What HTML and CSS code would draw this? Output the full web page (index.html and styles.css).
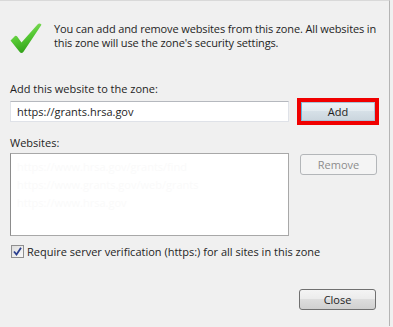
FILE: index.html
```html
<!DOCTYPE html>
<html lang="en">
<head>
    <meta charset="UTF-8">
    <meta name="viewport" content="width=device-width, initial-scale=1.0">
    <title>Trusted sites</title>
    <link rel="stylesheet" href="styles.css">
</head>
<body>
    <div class="dialog">
        <div class="intro">
            <svg class="check-icon" width="32" height="31" viewBox="0 0 32 31">
                <defs>
                    <linearGradient id="checkFill" x1="0" y1="0" x2="0.4" y2="1">
                        <stop offset="0" stop-color="#a6ea7a"/>
                        <stop offset="0.55" stop-color="#56c934"/>
                        <stop offset="1" stop-color="#32a01a"/>
                    </linearGradient>
                </defs>
                <path d="M0.5 17.5 L5 13 Q6 12.2 7 13.2 L11.5 19.5 L27.5 1.5 Q29.5 -0.5 31.5 1.8 L13.5 28.8 Q11.5 31.2 9.5 28.8 Z" fill="url(#checkFill)"/>
            </svg>
            <p class="intro-text">You can add and remove websites from this zone. All websites in<br>this zone will use the zone's security settings.</p>
        </div>

        <label class="field-label" for="site">Add this website to the zone:</label>
        <div class="add-row">
            <input id="site" class="text-input" type="text" value="https://grants.hrsa.gov">
            <div class="highlight">
                <button class="btn">Add</button>
            </div>
        </div>

        <div class="field-label websites-label">Websites:</div>
        <div class="list-row">
            <div class="site-list">
                <div class="site-item">https://www.hrsa.gov/grants/find</div>
                <div class="site-item">https://www.grants.gov/web/grants</div>
                <div class="site-item">https://www.hrsa.gov</div>
            </div>
            <button class="btn" disabled>Remove</button>
        </div>

        <label class="check-row">
            <span class="checkbox">
                <svg width="9" height="9" viewBox="0 0 9 9"><path d="M1 4.5 L3.5 7.5 L8 0.8" fill="none" stroke="#2b3f8f" stroke-width="1.8"/></svg>
            </span>
            Require server verification (https:) for all sites in this zone
        </label>

        <div class="footer">
            <button class="btn">Close</button>
        </div>
    </div>
</body>
</html>
```

FILE: styles.css
```css
body {
    margin: 0;
    background: #f0f0f0;
    font-family: "Open Sans", "Noto Sans", sans-serif;
    font-size: 11px;
    color: #1e1e1e;
}

.dialog {
    width: 390px;
    height: 326px;
    border-top: 1px solid #d9d9d9;
    border-right: 1px solid #b4b4b4;
    box-sizing: border-box;
    padding: 0 0 0 10px;
}

.intro {
    display: flex;
    align-items: flex-start;
    padding-top: 21px;
}

.check-icon {
    flex: none;
    margin-top: 1px;
}

.intro-text {
    margin: 0 0 0 12px;
    line-height: 14px;
    letter-spacing: -0.13px;
}

.field-label {
    display: block;
    line-height: 15px;
}

.intro + .field-label {
    margin-top: 27px;
}

.add-row {
    display: flex;
    align-items: center;
    margin-top: 2px;
}

.text-input {
    width: 279px;
    height: 21px;
    box-sizing: border-box;
    border: 1px solid #dfe2e8;
    border-top-color: #b5b8be;
    background: #fff;
    font: inherit;
    color: #1e1e1e;
    padding: 0 6px;
    outline: none;
}

.highlight {
    margin-left: 8px;
    border: 4px solid #f00000;
    display: flex;
}

.btn {
    width: 77px;
    height: 21px;
    box-sizing: border-box;
    border: 1px solid #707070;
    border-radius: 3px;
    background: linear-gradient(#f4f4f4, #ececec 45%, #dddddd 50%, #d0d0d0);
    font: inherit;
    color: #1e1e1e;
    padding: 0;
}

.highlight .btn {
    width: 74px;
    height: 19px;
    border: 1px solid #a9c3d6;
    border-left-color: #5fb3e0;
    border-radius: 0;
    background: linear-gradient(#ecf2f6, #e2eaef 45%, #d6e0e7 50%, #cbd6de);
}

.btn:disabled {
    border-color: #b3b6b9;
    background: #f4f4f4;
    color: #8c8c8c;
}

.websites-label {
    margin-top: 10px;
}

.list-row {
    display: flex;
    align-items: flex-start;
    margin-top: 3px;
}

.site-list {
    width: 279px;
    height: 83px;
    box-sizing: border-box;
    border: 1px solid #a8a8a8;
    border-left-color: #8c8c8c;
    background: #fff;
    padding: 4px 0 0 6px;
    margin-right: 11px;
}

.site-item {
    line-height: 18px;
    color: #fafafa;
}

.list-row .btn {
    margin-top: 1px;
}

.check-row {
    display: flex;
    align-items: center;
    margin-top: 8px;
    line-height: 15px;
}

.checkbox {
    width: 13px;
    height: 13px;
    box-sizing: border-box;
    border: 1px solid #8f8f8f;
    background: linear-gradient(135deg, #dcdcdc, #fafafa);
    display: flex;
    align-items: center;
    justify-content: center;
    margin: 0 3px 0 1px;
}

.footer {
    display: flex;
    justify-content: flex-end;
    padding-right: 13px;
    margin-top: 30px;
}
```
